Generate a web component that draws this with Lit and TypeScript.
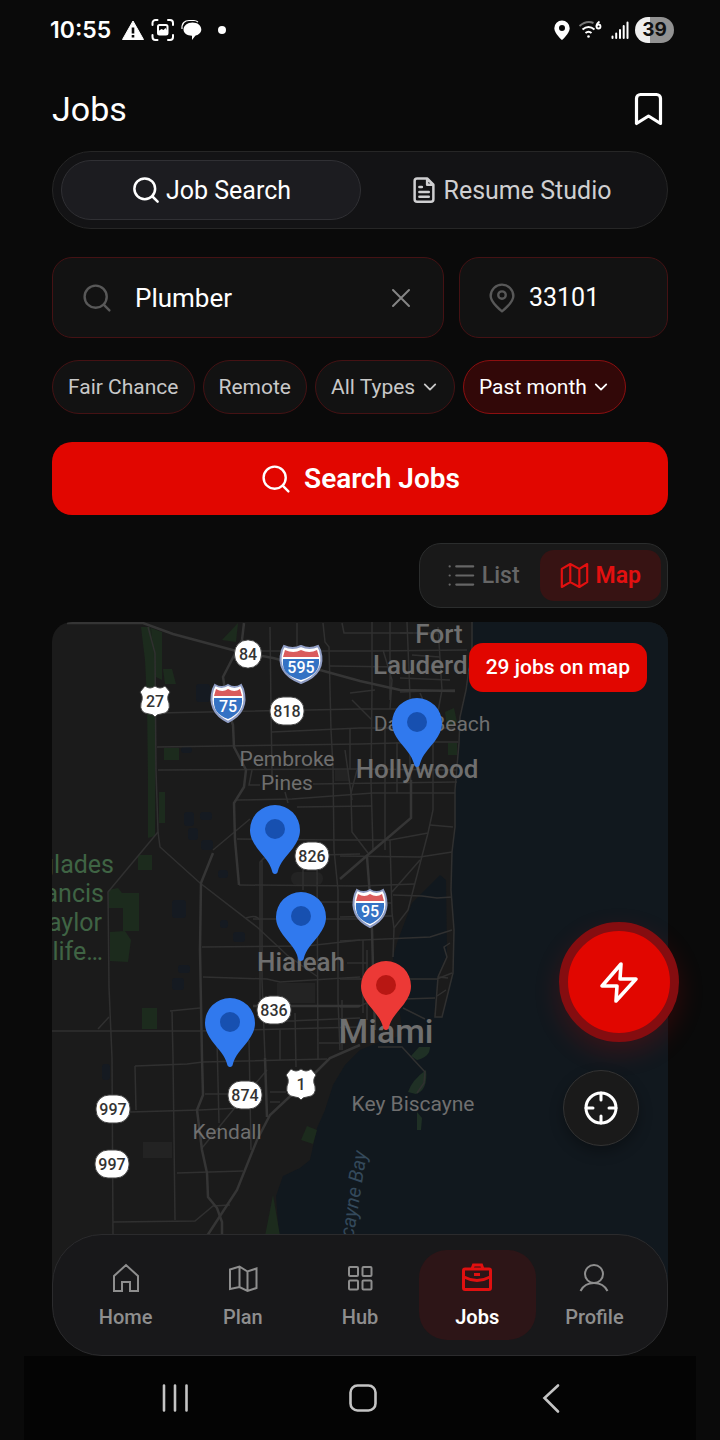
import { html, svg, css, LitElement } from "lit";
import { customElement, property, state } from "lit/decorators.js";
import { classMap } from "lit/directives/class-map.js";

// Map artwork is drawn in this coordinate window
const MAP = { x: 52, y: 622, w: 616, h: 674 };

const icons = {
  search: svg`<circle cx="11" cy="11" r="8.300" /><path d="m17 17 4.300 4.300" />`,
  doc: svg`<path d="M14.500 2.800h-8a2 2 0 0 0-2 2v14.500a2 2 0 0 0 2 2h11a2 2 0 0 0 2-2V7.800zM14.500 2.800v5h5M8.300 9.500h2M8.300 13.500h7.500M8.300 17.300h7.500" />`,
  close: svg`<path d="M6 6l12 12M18 6 6 18" />`,
  place: svg`<path d="M20.500 10.500c0 5-8.500 11.500-8.500 11.500s-8.500-6.500-8.500-11.500a8.500 8.500 0 0 1 17 0z" /><circle cx="12" cy="9.800" r="2.800" />`,
  chevron: svg`<path d="m5 8.500 7 7 7-7" />`,
  list: svg`<path d="M8.500 4.500h14M8.500 12h14M8.500 19.500h14M3 4.500h.1M3 12h.1M3 19.500h.1" />`,
  map: svg`<path d="M1.500 6.500v15l7-4 7.500 4 6.500-4v-15l-6.500 4-7.500-4zM8.500 2.500v15M16 6.500v15" />`,
};

const tabIcons: Record<string, unknown> = {
  Home: svg`<path d="M4 29V14L16 3l12 11v15h-8v-9h-8v9z" />`,
  Plan: svg`<path d="M3 7.500 12.500 4.500l8 5 9-3V26l-9 3-8-4L3 27zM12.500 4.500V25M20.500 9.500V29" />`,
  Hub: svg`<rect x="5" y="5" width="9" height="9" rx="1" /><rect x="18.500" y="5" width="9" height="9" rx="1" /><rect x="5" y="18.500" width="9" height="9" rx="1" /><rect x="18.500" y="18.500" width="9" height="9" rx="1" />`,
  Jobs: svg`<g stroke-width="3"><rect x="2.500" y="7" width="27" height="20.500" rx="1.500" /><path d="M11 7l1.500-4h8L22 7M3 15q13 7 26 0M13 12.500h6" /></g>`,
  Profile: svg`<circle cx="16" cy="12" r="9" /><path d="M2.500 29C5 24 10 21 16 21s11 3 13.500 8" />`,
};

const parks = [
  "141,627 150,627 156,655 155,836 148,838 148,780 147,700 145,660",
  "151,628 162,632 162,680 156,677",
  "163,669 172,669 176,684 165,684",
  "238,623 236,642 222,640",
  "164,748 179,748 179,760 164,760",
  "159,792 165,792 165,823 159,823",
  "138,855 152,855 152,870 138,870",
  "108,890 118,888 122,893 139,893 139,931 123,931 123,908 108,908",
  "110,932 125,931 131,940 128,962 110,961",
  "142,1008 157,1008 157,1029 142,1029",
  "307,1126 317,1130 313,1144 301,1140",
  "273,1195 280,1236 265,1236",
  "448,743 457,743 457,755 448,755",
  "445,712 454,708 457,722 447,728",
];

const keys = [
  "M430 1047q0 10-13 13l-6-4 8-9z",
  "M426 1070q2 20-10 24l-8-2q4-12 18-22z",
  "M417 1112l5 6-1 12h-4z",
];

const lakes = [
  [196, 684, 14, 18], [181, 747, 11, 6], [184, 812, 10, 14], [200, 812, 12, 8],
  [188, 828, 10, 12], [201, 840, 12, 10], [172, 900, 14, 18], [218, 870, 10, 8],
  [233, 932, 12, 10], [178, 965, 12, 8], [172, 978, 12, 12], [102, 1064, 8, 16],
  [220, 920, 8, 8],
];

const highways = [
  "M67 623H143L173 634 240 652 273 658 320 670 360 681 400 690 455 691",
  "M244 623 242 640 223 677 228 710 233 725 234 747 246 770 244 787 234 803 235 840 239 885",
  "M367 857 369 883 372 930 373 967 375 1030",
  "M213 853 201 883 200 950 202 1058 203 1095 197 1110 202 1150 207 1173 208 1197 217 1208 222 1222V1240",
  "M360 1045 330 1058 315 1073 270 1115 257 1140 237 1190 207 1236",
  "M340 879 370 853 411 818V780",
  "M253 1006H360",
  "M265 1058 267 1117",
];

const roads = [
  "M148 627 155 653 156 770 158 832 160 847 200 883 257 927 287 955 318 977",
  "M158 832 108 892 109 987 112 1058 113 1236",
  "M270 627 271 710 272 770V780M285 792 288 803",
  "M323 623 325 642 329 647 331 730 333 767 334 850 338 890V1000L340 1050",
  "M297 623V646M342 623 344 633H400L440 633",
  "M260 651H372L467 650M330 666 400 667M400 633H413",
  "M157 713 360 709 410 709M272 732 360 728 455 728",
  "M157 747 360 744 433 742H458M158 770 355 769 457 770",
  "M237 800 292 799 373 793H455M297 807 372 806",
  "M237 839 340 840H390L428 833M430 825 453 827",
  "M252 770 249 785H260M313 784 457 782",
  "M250 819 213 850M357 770 351 793 352 832 368 853",
  "M372 622V690L371 780 373 850M390 622V700M383 650 392 680 390 709",
  "M407 622 410 697V763L411 790M438 627 442 690 437 717 433 742V810L428 833 415 883 408 910 394 928 393 957",
  "M472 622V647L466 690 460 717 459 743 455 790 455 827 452 852 451 890 454 930 453 973 442 1017H435L438 977 447 957 444 947 450 943",
  "M390 840 392 913 394 928M420 860 392 892",
  "M340 856 420 857 452 852M239 885 360 886 415 884M393 895 422 896 437 898 452 897",
  "M340 902H353M385 903H392M340 917 392 916M340 941 430 937 452 930",
  "M340 979H437L452 973M347 963H368M363 940V1013M340 1007H358L373 1000 435 998",
  "M438 977 448 978M437 996 446 990M403 1008 425 1019",
  "M260 1000V862L264 858H280M262 860V980L265 1058M320 855 360 854",
  "M202 947 307 946 360 940M203 977 267 979 280 982 360 977M253 919H360",
  "M246 918Q256 914 260 920M317 857 318 1060M303 850V890M320 902H340",
  "M52 1031H200L360 1027M170 1011 200 1008M172 1011 173 1058 175 1220M98 1029 109 1017",
  "M265 1022 360 1018M295 1013 296 1067M280 1030V1060M319 1043H345",
  "M135 1066 187 1064 203 1062 327 1059M135 1066 136 1110M130 1112 200 1110 240 1108",
  "M205 1094H230M217 1040 219 1123M249 1040 251 1150M267 1070 233 1110 202 1148",
  "M177 1173 243 1171M113 1222 195 1221 213 1206 230 1205M270 1092H286M270 1102H280",
  "M378 1047H402L425 1072 424 1083 417 1093M342 1000V1050M367 950V1020",
  "M350 693 375 690M352 700 372 720M345 750 352 800M420 693 432 720M400 692 455 690",
  "M400 678 450 680M412 655 440 657M385 728V850M350 728V769M397 742V793",
];

const shields = [
  { kind: "state", text: "84", x: 248, y: 654, w: 27 },
  { kind: "state", text: "818", x: 287, y: 711, w: 34 },
  { kind: "state", text: "826", x: 312, y: 856, w: 34 },
  { kind: "state", text: "836", x: 274, y: 1010, w: 34 },
  { kind: "state", text: "874", x: 245, y: 1095, w: 34 },
  { kind: "state", text: "997", x: 113, y: 1109, w: 34 },
  { kind: "state", text: "997", x: 112, y: 1164, w: 34 },
  { kind: "us", text: "27", x: 155, y: 701, w: 28 },
  { kind: "us", text: "1", x: 301, y: 1084, w: 28 },
  { kind: "interstate", text: "595", x: 301, y: 664, w: 42 },
  { kind: "interstate", text: "75", x: 228, y: 703, w: 34 },
  { kind: "interstate", text: "95", x: 370, y: 908, w: 34 },
];

const jobPins = [
  { x: 417, y: 768, title: "Hollywood" },
  { x: 275, y: 875, title: "Miami Gardens" },
  { x: 301, y: 962, title: "Hialeah" },
  { x: 230, y: 1068, title: "Westchester" },
  { x: 386, y: 1031, title: "Miami", here: true },
];

@customElement("job-icon")
export class JobIcon extends LitElement {
  @property() name: keyof typeof icons = "search";

  static styles = css`
    :host {
      display: block;
      flex: none;
      width: 32px;
      height: 32px;
    }

    svg {
      display: block;
      width: 100%;
      height: 100%;
      fill: none;
      stroke: currentColor;
      stroke-width: var(--stroke, 1.8);
      stroke-linecap: round;
      stroke-linejoin: round;
    }
  `;

  override render() {
    return html`<svg viewBox="0 0 24 24" aria-hidden="true">${icons[this.name]}</svg>`;
  }
}

@customElement("job-map")
export class JobMap extends LitElement {
  static styles = css`
    :host {
      display: block;
      position: relative;
      overflow: hidden;
      border-radius: 20px 20px 0 0;
      background: #1b1b1b;
    }

    .canvas {
      position: absolute;
      inset: 0;
      width: 100%;
      height: 100%;
      font-family: Roboto, sans-serif;
    }

    .sea {
      fill: #11181e;
    }

    .lake {
      fill: #151a21;
    }

    .park {
      fill: #1c2b1d;
    }

    .key {
      fill: #1f3025;
    }

    .block {
      fill: #232323;
    }

    .road {
      fill: none;
      stroke: #303030;
      stroke-width: 1.5;
    }

    .highway {
      fill: none;
      stroke: #353535;
      stroke-width: 2.5;
    }

    .label {
      fill: #6f6f6f;
      font-size: 21px;
      text-anchor: middle;
    }

    .town {
      font-size: 26px;
      font-weight: 500;
    }

    .city {
      font-size: 34px;
      font-weight: 500;
    }

    .start {
      text-anchor: start;
    }

    .wild {
      fill: #3f6444;
      font-size: 25px;
      text-anchor: end;
    }

    .water {
      fill: #34495b;
      font-size: 20px;
      font-style: italic;
      text-anchor: end;
    }

    .plate {
      fill: #fff;
      stroke: #444;
      stroke-width: 1;
    }

    .rim {
      fill: #fff;
      stroke: #8f9dc4;
      stroke-width: 2;
    }

    .crown {
      fill: #da5b5c;
    }

    .blue {
      fill: #3472c4;
    }

    .number {
      fill: #333;
      font-size: 16px;
      font-weight: 500;
      text-anchor: middle;
    }

    .light {
      fill: #fff;
    }

    .pin {
      position: absolute;
      width: 52px;
      height: 72px;
      padding: 0;
      border: 0;
      background: none;
      transform: translate(-50%, -100%);
      color: #3079ee;
    }

    .pin.here {
      color: #ec3936;
    }

    .pin svg {
      display: block;
    }

    .dot {
      fill: #1750b0;
    }

    .here .dot {
      fill: #b81713;
    }

    .count {
      position: absolute;
      top: 21px;
      right: 21px;
      padding: 0 17px;
      border-radius: 14px;
      background: #e10600;
      color: #fff;
      font: 500 21px/49px Roboto, sans-serif;
    }
  `;

  shield(s: (typeof shields)[number]) {
    const h = s.w / 2;
    if (s.kind === "state") {
      return svg`
        <rect class="plate" x=${s.x - h} y=${s.y - 14} width=${s.w} height="28" rx="13" />
        <text class="number" x=${s.x} y=${s.y + 6}>${s.text}</text>
      `;
    }
    if (s.kind === "us") {
      return svg`
        <path class="plate" transform="translate(${s.x} ${s.y})"
          d="M-10-15q5 4 10 0q5 4 10 0l5 6q-4 5-1 11q2 10-8 11q-4 0-6 3q-2-3-6-3q-10-1-8-11q3-6-1-11z" />
        <text class="number" x=${s.x} y=${s.y + 6}>${s.text}</text>
      `;
    }
    return svg`
      <g transform="translate(${s.x} ${s.y})">
        <path class="rim" d="M${4 - h}-18q${h / 2 - 2} 4 ${h - 4} 0q${h / 2 - 2} 4 ${h - 4} 0l2 4c5 17-3 27-${h - 2} 33c-${h - 5}-6-${h + 3}-16-${h - 2}-33z" />
        <path class="crown" d="M${5 - h}-14q${h / 2 - 2} 4 ${h - 5} 0q${h / 2 - 2} 4 ${h - 5} 0l2 7h-${2 * h - 6}z" />
        <path class="blue" d="M${3 - h}-5h${2 * h - 6}c1 11-5 17-${h - 3} 21c-${h - 6}-4-${h - 2}-10-${h - 3}-21z" />
        <text class="number light" y="9">${s.text}</text>
      </g>
    `;
  }

  override render() {
    return html`
      <svg class="canvas" viewBox="${MAP.x} ${MAP.y} ${MAP.w} ${MAP.h}" preserveAspectRatio="xMidYMid slice">
        <path class="sea" d="M472 622V647L466 690 460 717 459 743 455 790V827L452 852 451 890 454 930 453 973 442 1017H434L438 975 447 955 446 880 440 875 412 903 398 940 393 957 398 1000 403 1035 380 1042 360 1050 345 1065 333 1085 325 1110 317 1128 310 1160 300 1168 283 1176 276 1196 279 1236 282 1356H668V622z" />
        ${lakes.map(([x, y, w, h]) => svg`<rect class="lake" x=${x} y=${y} width=${w} height=${h} rx="3" />`)}
        ${parks.map((p) => svg`<polygon class="park" points=${p} />`)}
        ${keys.map((k) => svg`<path class="key" d=${k} />`)}
        <rect class="block" x="143" y="1142" width="29" height="16" />
        <rect class="block" x="277" y="983" width="38" height="20" />
        <rect class="block" x="291" y="872" width="32" height="13" rx="6" />
        <rect class="block" x="335" y="770" width="14" height="11" />
        ${roads.map((d) => svg`<path class="road" d=${d} />`)}
        ${highways.map((d) => svg`<path class="highway" d=${d} />`)}

        <text class="label town" x="439" y="643">Fort</text>
        <text class="label town start" x="373" y="674">Lauderdale</text>
        <text class="label" x="432" y="731">Dania Beach</text>
        <text class="label town" x="417" y="778">Hollywood</text>
        <text class="label" x="287" y="766">Pembroke</text>
        <text class="label" x="287" y="790">Pines</text>
        <text class="label town" x="301" y="971">Hialeah</text>
        <text class="label city" x="386" y="1043">Miami</text>
        <text class="label" x="413" y="1111">Key Biscayne</text>
        <text class="label" x="227" y="1139">Kendall</text>
        <text class="wild" x="114" y="873">glades</text>
        <text class="wild" x="104" y="902">ancis</text>
        <text class="wild" x="102" y="931">aylor</text>
        <text class="wild" x="103" y="960">life…</text>
        <text class="water" transform="translate(367 1152) rotate(-81)">Biscayne Bay</text>
        ${shields.map((s) => this.shield(s))}
      </svg>
      ${jobPins.map(
        (p) => html`
          <button
            class=${classMap({ pin: true, here: !!p.here })}
            style="left: ${((p.x - MAP.x) / MAP.w) * 100}%; top: ${((p.y - MAP.y) / MAP.h) * 100}%"
            aria-label=${p.title}
          >
            <svg width="52" height="72" viewBox="0 0 52 72">
              <path
                fill="currentColor"
                d="M26 2a25 25 0 0 1 25 25c0 7-3 12-7 18-7 9-13 14-15.500 24.500q-2.500 3-5 0C21 59 15 54 8 45 4 39 1 34 1 27A25 25 0 0 1 26 2z"
              />
              <circle class="dot" cx="26" cy="26" r="10" />
            </svg>
          </button>
        `,
      )}
      <div class="count">29 jobs on map</div>
    `;
  }
}

@customElement("app-root")
export class AppRoot extends LitElement {
  @state() tab = "Jobs";
  @state() view = "Map";

  static styles = css`
    :host {
      display: flex;
      flex-direction: column;
      min-height: 100vh;
      background: #0a0a0a;
      color: #fff;
      font-family: Roboto, sans-serif;
    }

    * {
      box-sizing: border-box;
    }

    button,
    input,
    select {
      margin: 0;
      padding: 0;
      border: 0;
      background: none;
      color: inherit;
      font: inherit;
      outline: none;
    }

    svg {
      display: block;
      flex: none;
    }

    .status {
      display: flex;
      align-items: center;
      gap: 6px;
      height: 60px;
      padding: 0 46px 0 50px;
    }

    .clock {
      margin-right: 4px;
      font: 600 23px/28px Inter, sans-serif;
    }

    .spacer {
      flex: 1;
    }

    .battery {
      width: 39px;
      border-radius: 13px;
      background: linear-gradient(90deg, #eee 39%, #929292 39%);
      color: #111;
      font: 700 19px/26px Inter, sans-serif;
      text-align: center;
    }

    .stage {
      position: relative;
      display: flex;
      flex: 1;
      flex-direction: column;
      padding: 0 52px;
    }

    .header {
      display: flex;
      align-items: center;
      justify-content: space-between;
      height: 91px;
      padding-top: 6px;
    }

    h1 {
      margin: 0;
      font-size: 34px;
      font-weight: 400;
      line-height: 40px;
    }

    .segment {
      display: flex;
      height: 78px;
      padding: 8px;
      border: 1px solid #262626;
      border-radius: 39px;
      background: #131315;
    }

    .segment button {
      display: flex;
      flex: 1;
      align-items: center;
      justify-content: center;
      gap: 5px;
      border-radius: 30px;
      color: #cfcfd1;
      font-size: 25px;
    }

    .segment .active {
      border: 1px solid #303034;
      background: #1c1c20;
      color: #fff;
    }

    .segment job-icon {
      width: 30px;
      height: 30px;
      --stroke: 2;
    }

    .fields {
      display: grid;
      grid-template-columns: minmax(0, 15fr) minmax(0, 8fr);
      gap: 15px;
      margin-top: 28px;
    }

    .field {
      display: flex;
      align-items: center;
      gap: 22px;
      height: 81px;
      padding: 0 26px 0 28px;
      border: 1px solid #451214;
      border-radius: 20px;
      background: #121212;
    }

    .field.zip {
      gap: 11px;
      padding-left: 26px;
    }

    .field job-icon {
      color: #585858;
    }

    .field input {
      flex: 1;
      width: 0;
      min-width: 0;
      font-size: 26px;
    }

    .field.zip input {
      font-size: 25px;
    }

    .clear job-icon {
      color: #858585;
      --stroke: 1.5;
    }

    .chips {
      display: flex;
      gap: 8px;
      margin-top: 22px;
    }

    .chip {
      display: grid;
      align-items: center;
      height: 54px;
      padding: 0 15px;
      border: 1px solid #451214;
      border-radius: 27px;
      background: #121212;
      color: #c8c8c8;
      font-size: 21px;
    }

    .chip select {
      grid-area: 1 / 1;
      padding-right: 23px;
      appearance: none;
    }

    .chip job-icon {
      grid-area: 1 / 1;
      justify-self: end;
      width: 18px;
      height: 18px;
      pointer-events: none;
      --stroke: 2.4;
    }

    .chip.on {
      border-color: #8c0f10;
      background: #320808;
      color: #fff;
    }

    .submit {
      display: flex;
      align-items: center;
      justify-content: center;
      gap: 12px;
      height: 73px;
      margin-top: 28px;
      border-radius: 20px;
      background: #e10600;
      font-size: 28px;
      font-weight: 600;
    }

    .views {
      display: flex;
      align-self: flex-end;
      height: 65px;
      margin-top: 28px;
      padding: 6px;
      border: 1px solid #2b2d2d;
      border-radius: 22px;
      background: #191919;
    }

    .views button {
      display: flex;
      align-items: center;
      gap: 7px;
      padding: 0 20px;
      border-radius: 14px;
      color: #666;
      font-size: 23px;
      font-weight: 500;
    }

    .views .active {
      background: #371313;
      color: #e31010;
      font-weight: 600;
    }

    .views job-icon {
      width: 29px;
      height: 29px;
    }

    job-map {
      flex: 1;
      min-height: 640px;
      margin: 14px 0 60px;
    }

    .bolt,
    .locate {
      position: absolute;
      display: grid;
      place-items: center;
      border-radius: 50%;
    }

    .bolt {
      right: 41px;
      bottom: 314px;
      width: 120px;
      height: 120px;
      border: 9px solid #850d10;
      background: #e10600;
      box-shadow: 0 10px 26px rgba(225, 6, 0, 0.18);
    }

    .locate {
      right: 81px;
      bottom: 210px;
      width: 76px;
      height: 76px;
      border: 1px solid #333;
      background: #1a1a1a;
      box-shadow: 0 6px 14px rgba(0, 0, 0, 0.3);
    }

    .tabs {
      position: absolute;
      right: 52px;
      bottom: 0;
      left: 52px;
      display: flex;
      height: 122px;
      padding: 15px 14px;
      border: 1px solid #2b2b2d;
      border-radius: 50px;
      background: #18181a;
    }

    .tabs button {
      display: flex;
      flex: 1;
      flex-direction: column;
      align-items: center;
      justify-content: center;
      gap: 11px;
      border-radius: 28px;
      color: #8e8e8e;
      font-size: 20px;
      font-weight: 500;
      line-height: 24px;
    }

    .tabs svg,
    .system svg {
      fill: none;
      stroke: currentColor;
      stroke-width: 2;
    }

    .tabs .active {
      background: #2d1517;
      color: #fff;
      font-weight: 600;
    }

    .tabs .active svg {
      color: #e01010;
    }

    .system {
      display: flex;
      align-items: center;
      justify-content: center;
      gap: 148px;
      height: 84px;
      margin: 0 24px;
      padding-left: 6px;
      background: #040404;
      color: #c4c4c4;
    }

    .system svg {
      stroke-linecap: round;
    }
  `;

  statusBar() {
    return html`
      <div class="status">
        <span class="clock">10:55</span>
        <svg width="24" height="24" viewBox="0 0 24 24">
          <path fill="#fff" stroke="#fff" stroke-linejoin="round" d="M12 3 1.500 21.500h21z" />
          <path stroke="#0a0a0a" stroke-width="2.600" d="M12 9.500v6M12 17v2.600" />
        </svg>
        <svg width="24" height="24" viewBox="0 0 24 24" fill="none" stroke="#fff" stroke-width="2" stroke-linecap="round">
          <path d="M1.500 7V5a3 3 0 0 1 3-3h2M17 2h2a3 3 0 0 1 3 3v2M22 17v2a3 3 0 0 1-3 3h-2M6.500 22h-2a3 3 0 0 1-3-3v-2" />
          <rect x="7" y="7" width="9.500" height="9.500" rx="1.500" />
          <path fill="#fff" stroke="none" d="M7.500 16v-3l3-2 2 1 2-2 2 3v3z" />
        </svg>
        <svg width="21" height="22" viewBox="0 0 21 22">
          <path fill="none" stroke="#fff" stroke-width="1.200" d="M1 10C.5 4 4 1.500 8 1.500h5q2 0 4 1.500" />
          <path fill="#fff" d="M11.500 3.500c5 0 8.800 2.800 8.800 7 0 3.200-3 5.500-6 6.200l-3.300 4.300v-4.300c-5 0-8.500-2.500-8.500-6.200s4-7 9-7z" />
        </svg>
        <svg width="30" height="8" viewBox="0 0 30 8"><circle cx="14" cy="4" r="4" fill="#fff" /></svg>
        <span class="spacer"></span>
        <svg width="18" height="22" viewBox="0 0 18 22">
          <path fill="#fff" fill-rule="evenodd" d="M9 1.500a7.700 7.700 0 0 1 7.700 7.700c0 5-7.700 11.800-7.700 11.800S1.300 14.200 1.300 9.200A7.700 7.700 0 0 1 9 1.500zM9 6a3 3 0 1 0 0 6a3 3 0 0 0 0-6z" />
        </svg>
        <svg width="28" height="20" viewBox="0 0 28 20" fill="none" stroke="#fff" stroke-width="2">
          <path stroke="#777" d="M2.500 6q7-6 14-3" />
          <path d="M5.500 9.500q6-5 12 0M8.500 13q3-2.500 6 0" />
          <circle cx="11.500" cy="16.500" r="1.300" fill="#fff" stroke="none" />
          <path stroke-width="1.800" d="M22.500 1.500q-3 2-3 5" /><circle cx="21.500" cy="6.500" r="2" stroke-width="1.800" />
        </svg>
        <svg width="18" height="20" viewBox="0 0 18 20" stroke="#fff" stroke-width="2" stroke-linecap="round">
          <path d="M1.500 16.500v1.500M5.200 13.500v4.500M9 10v8M12.700 6v12M16.500 2.500v15.500" />
        </svg>
        <span class="battery">39</span>
      </div>
    `;
  }

  viewButton(name: string, icon: string) {
    return html`
      <button class=${classMap({ active: this.view === name })} @click=${() => (this.view = name)}>
        <job-icon name=${icon}></job-icon>${name}
      </button>
    `;
  }

  override render() {
    return html`
      ${this.statusBar()}
      <div class="stage">
        <header class="header">
          <h1>Jobs</h1>
          <button aria-label="Saved jobs">
            <svg width="40" height="40" viewBox="0 0 40 40" fill="none" stroke="#fff" stroke-width="3.200" stroke-linejoin="round">
              <path d="M8.500 34.500V9.500a4 4 0 0 1 4-4h16a4 4 0 0 1 4 4v25L20.500 27z" />
            </svg>
          </button>
        </header>

        <div class="segment">
          <button class="active"><job-icon name="search"></job-icon>Job Search</button>
          <button><job-icon name="doc"></job-icon>Resume Studio</button>
        </div>

        <div class="fields">
          <div class="field">
            <job-icon name="search"></job-icon>
            <input type="text" aria-label="Job title" .value=${"Plumber"} />
            <button class="clear" aria-label="Clear"><job-icon name="close"></job-icon></button>
          </div>
          <div class="field zip">
            <job-icon name="place"></job-icon>
            <input type="text" aria-label="ZIP code" .value=${"33101"} />
          </div>
        </div>

        <div class="chips">
          <button class="chip">Fair Chance</button>
          <button class="chip">Remote</button>
          <label class="chip">
            <select aria-label="Job type"><option>All Types</option></select>
            <job-icon name="chevron"></job-icon>
          </label>
          <label class="chip on">
            <select aria-label="Date posted"><option>Past month</option></select>
            <job-icon name="chevron"></job-icon>
          </label>
        </div>

        <button class="submit"><job-icon name="search"></job-icon>Search Jobs</button>

        <div class="views">${this.viewButton("List", "list")}${this.viewButton("Map", "map")}</div>

        <job-map></job-map>

        <button class="bolt" aria-label="Quick actions">
          <svg width="44" height="44" viewBox="0 0 44 44" fill="none" stroke="#fff" stroke-width="3.600" stroke-linejoin="round">
            <path d="M24 4 5 26h15l-1 15 20-22H23z" />
          </svg>
        </button>
        <button class="locate" aria-label="My location">
          <svg width="36" height="36" viewBox="0 0 36 36" fill="none" stroke="#fff" stroke-width="3" stroke-linecap="round">
            <circle cx="18" cy="18" r="15" />
            <path d="M18 3v7M18 26v7M3 18h7M26 18h7" />
          </svg>
        </button>

        <nav class="tabs">
          ${Object.keys(tabIcons).map(
            (name) => html`
              <button class=${classMap({ active: this.tab === name })} @click=${() => (this.tab = name)}>
                <svg width="32" height="32" viewBox="0 0 32 32">${tabIcons[name]}</svg>
                ${name}
              </button>
            `,
          )}
        </nav>
      </div>

      <div class="system">
        <button aria-label="Recent apps">
          <svg width="40" height="40" viewBox="0 0 40 40"><path stroke-width="2.600" d="M9 7.500v25M20 7.500v25M31.500 7.500v25" /></svg>
        </button>
        <button aria-label="Home screen">
          <svg width="40" height="40" viewBox="0 0 40 40"><rect x="7.500" y="7.500" width="25" height="25" rx="7" stroke-width="2.600" /></svg>
        </button>
        <button aria-label="Back">
          <svg width="40" height="40" viewBox="0 0 40 40"><path stroke-width="2.600" d="M27 7.500 13.500 20 27 33.500" /></svg>
        </button>
      </div>
    `;
  }
}
